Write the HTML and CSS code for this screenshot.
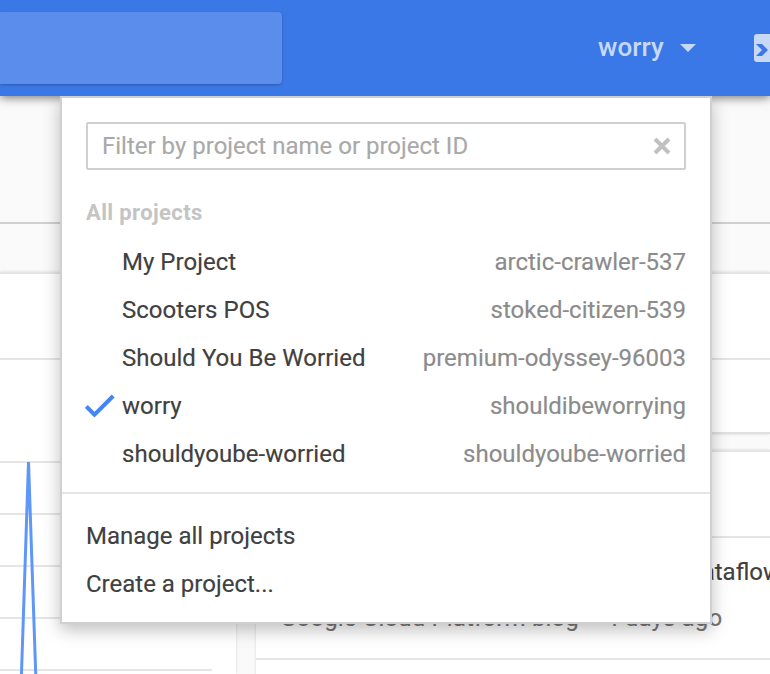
FILE: index.html
```
<!DOCTYPE html>
<html lang="en">
<head>
<meta charset="utf-8">
<title>Project picker</title>
<link rel="stylesheet" href="styles.css">
</head>
<body>
<header class="topbar">
  <div class="search"></div>
  <div class="current"><span>worry</span><svg class="caret" width="16" height="8" viewBox="0 0 16 8"><path d="M0 0h16L8 8z" fill="#c8d9f8"/></svg></div>
  <svg class="shell" width="28" height="28" viewBox="0 0 28 28"><rect width="28" height="28" rx="3" fill="#c8d9f8"/><path d="M2 10h6l6 6-6 6H2l6-6z" fill="#3b78e7"/></svg>
</header>
<main class="page">
  <div class="toolbar"></div>
  <div class="columns">
    <section class="card chart-card">
      <div class="card-head"></div>
      <svg class="chart" width="236" height="314" viewBox="0 360 236 314">
        <path d="M0 462H212M0 514H212M0 566H212M0 618H212M0 670H212" stroke="#e5e5e5" stroke-width="2"/>
        <path d="M21.400 676L28.500 462L35.800 676" fill="none" stroke="#5e97f6" stroke-width="3" stroke-linejoin="bevel"/>
      </svg>
    </section>
    <div class="side">
      <section class="card status"><div class="card-head"></div></section>
      <section class="card news">
        <div class="card-head"></div>
        <article class="story">
          <p class="headline">Google Cloud Dataflow</p>
          <p class="source"><span>Google Cloud Platform blog</span><span>4 days ago</span></p>
        </article>
      </section>
    </div>
  </div>
</main>
<div class="menu">
  <div class="filter"><span>Filter by project name or project ID</span><svg width="18" height="18" viewBox="0 0 18 18"><path d="M2 2l14 14M16 2L2 16" stroke="#c0c0c0" stroke-width="4"/></svg></div>
  <h2 class="group">All projects</h2>
  <ul class="projects">
    <li><span class="mark"></span><span class="name">My Project</span><span class="id">arctic-crawler-537</span></li>
    <li><span class="mark"></span><span class="name">Scooters POS</span><span class="id">stoked-citizen-539</span></li>
    <li><span class="mark"></span><span class="name">Should You Be Worried</span><span class="id">premium-odyssey-96003</span></li>
    <li><span class="mark"><svg width="30" height="26" viewBox="0 0 30 26"><path d="M1.300 13.500L9.500 21.700L28.200 3" fill="none" stroke="#4285f4" stroke-width="4"/></svg></span><span class="name">worry</span><span class="id">shouldibeworrying</span></li>
    <li><span class="mark"></span><span class="name">shouldyoube-worried</span><span class="id">shouldyoube-worried</span></li>
  </ul>
  <ul class="actions">
    <li>Manage all projects</li>
    <li>Create a project...</li>
  </ul>
</div>
</body>
</html>
```
FILE: styles.css
```
* { box-sizing: border-box; }
body, p, ul, h2 { margin: 0; padding: 0; }
ul { list-style: none; }
svg { display: block; flex: none; }
body {
  width: 770px;
  height: 674px;
  overflow: hidden;
  position: relative;
  background: #fafafa;
  font: 24px/48px Roboto, "Liberation Sans", sans-serif;
  -webkit-text-stroke-width: .15px;
  color: #404040;
  white-space: nowrap;
}
.topbar {
  position: relative;
  display: flex;
  align-items: center;
  height: 96px;
  background: #3b78e7;
  box-shadow: 0 2px 9px rgba(0, 0, 0, .5);
}
.search {
  flex: none;
  width: 282px;
  height: 72px;
  border-radius: 0 4px 4px 0;
  background: #5b8dec;
  box-shadow: 0 1px 3px rgba(0, 0, 0, .25);
}
.current {
  flex: none;
  display: flex;
  align-items: center;
  width: 98px;
  margin-left: 316px;
  color: #c8d9f8;
  font-size: 26px;
  font-weight: 500;
  -webkit-text-stroke-width: 0;
}
.current span { width: 82px; padding-bottom: 2px; letter-spacing: .1px; }
.shell { margin: 0 -12px 0 58px; }
.toolbar { height: 128px; border-bottom: 2px solid #d0d0d0; }
.columns { display: flex; gap: 20px; padding-top: 48px; height: 450px; }
.card { background: #fff; border-top: 2px solid #e5e5e5; box-shadow: 0 0 3px rgba(0, 0, 0, .14); }
.card-head { height: 86px; border-bottom: 2px solid #e5e5e5; }
.chart-card { flex: none; width: 236px; height: 402px; }
.side { flex: 1; min-width: 0; }
.status { height: 162px; border-bottom: 2px solid #e0e0e0; }
.news { height: 240px; margin-top: 16px; }
.story { height: 122px; padding: 10px 0 0 24px; border-bottom: 2px solid #e5e5e5; }
.headline { width: 501px; text-align: right; }
.source { display: flex; gap: 26px; line-height: 44px; color: #777; letter-spacing: .15px; }
.menu {
  position: absolute;
  left: 60px;
  top: 96px;
  width: 652px;
  height: 528px;
  border: 2px solid #d0d0d0;
  background: #fff;
  box-shadow: 0 6px 16px rgba(0, 0, 0, .25);
  clip-path: inset(0 -40px -50px -40px);
}
.filter {
  display: flex;
  align-items: center;
  justify-content: space-between;
  height: 48px;
  margin: 24px 24px 0;
  padding: 0 13px 0 14px;
  border: 2px solid #d0d0d0;
  border-radius: 2px;
  color: #a9a9a9;
}
.group {
  margin: 19px 24px 1px;
  font-size: 22px;
  line-height: 48px;
  font-weight: 700;
  letter-spacing: .37px;
  color: #c4c4c4;
  -webkit-text-stroke-width: 0;
}
.projects { padding: 0 24px 14px; border-bottom: 2px solid #e5e5e5; }
.projects li { display: flex; align-items: center; height: 48px; }
.mark { width: 36px; }
.mark svg { margin-left: -1px; }
.name { flex: 1; letter-spacing: .03px; }
.id { color: #8b8b8b; }
.actions { padding: 18px 24px; }
```
